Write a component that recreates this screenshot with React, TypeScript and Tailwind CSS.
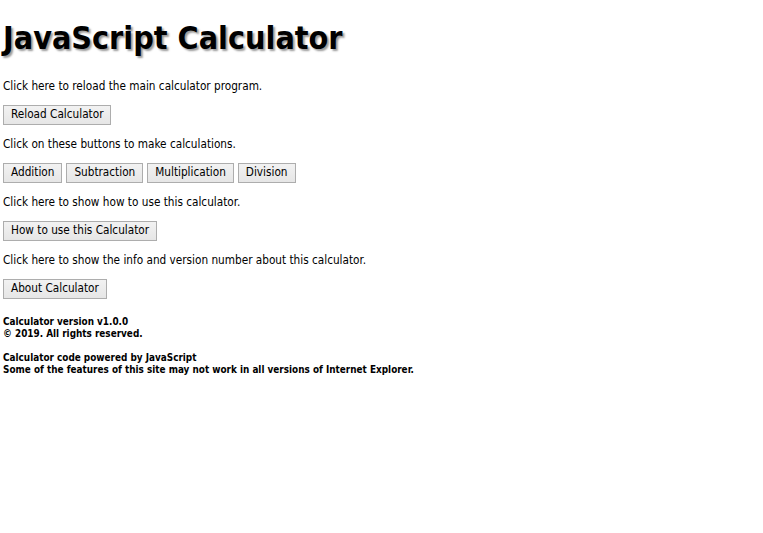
const font = { fontFamily: '"DejaVu Sans Condensed", "DejaVu Sans", sans-serif' };

function Btn({ children }: { children: string }) {
  return (
    <button className="h-[20px] px-[7px] text-[11.7px] leading-none text-black border border-[#adadad] bg-gradient-to-b from-[#f2f2f2] to-[#e6e6e6]">
      {children}
    </button>
  );
}

export default function App() {
  return (
    <div className="bg-white min-h-[533px] px-[3px] text-black" style={font}>
      <h1 className="pt-[18px] text-[32px] leading-[40px] font-bold [text-shadow:2px_2px_2px_#9a9a9a]">
        JavaScript Calculator
      </h1>

      <div className="mt-[20px] flex flex-col text-[11.7px]">
        <p className="h-[16px] leading-[16px]">Click here to reload the main calculator program.</p>
        <div className="mt-[11px] mb-[11px] flex gap-[4px]">
          <Btn>Reload Calculator</Btn>
        </div>

        <p className="h-[16px] leading-[16px]">Click on these buttons to make calculations.</p>
        <div className="mt-[11px] mb-[11px] flex gap-[4px]">
          <Btn>Addition</Btn>
          <Btn>Subtraction</Btn>
          <Btn>Multiplication</Btn>
          <Btn>Division</Btn>
        </div>

        <p className="h-[16px] leading-[16px]">Click here to show how to use this calculator.</p>
        <div className="mt-[11px] mb-[11px] flex gap-[4px]">
          <Btn>How to use this Calculator</Btn>
        </div>

        <p className="h-[16px] leading-[16px]">Click here to show the info and version number about this calculator.</p>
        <div className="mt-[11px] flex gap-[4px]">
          <Btn>About Calculator</Btn>
        </div>
      </div>

      <div className="mt-[17px] text-[9.9px] leading-[12px] font-bold">
        <p>Calculator version v1.0.0</p>
        <p>© 2019. All rights reserved.</p>
        <p className="mt-[12px]">Calculator code powered by JavaScript</p>
        <p>Some of the features of this site may not work in all versions of Internet Explorer.</p>
      </div>
    </div>
  );
}
